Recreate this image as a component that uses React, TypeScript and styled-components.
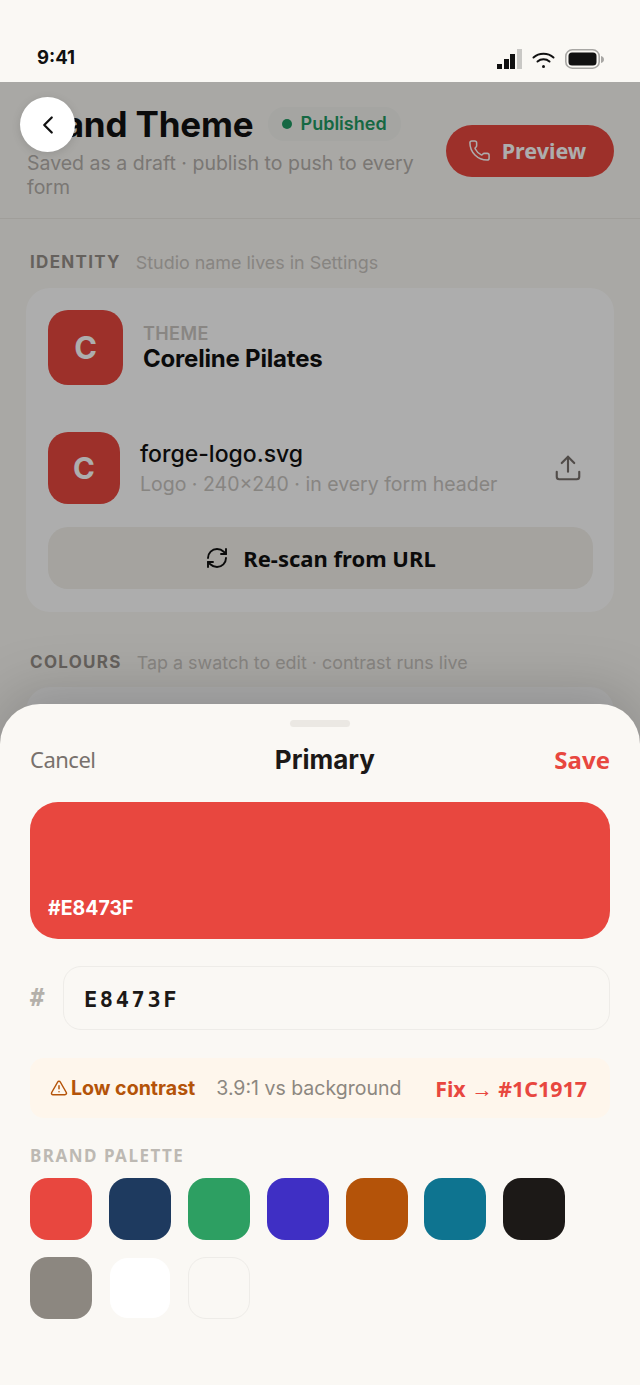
import React from 'react';
import { ChevronLeft, Phone, RefreshCw, TriangleAlert, Upload } from 'lucide-react';
import styled, { createGlobalStyle } from 'styled-components';

const PALETTE = ['#E8473F', '#1E3A5F', '#2D9F62', '#3F2FC4', '#B45309', '#0E7490', '#1C1917', '#8C8780'];

const GlobalStyle = createGlobalStyle`
  html, body {
    margin: 0;
    padding: 0;
    background: #faf8f4;
  }

  body {
    font-family: Inter, "Liberation Sans", sans-serif;
    color: #1c1917;
  }
`;

const App = () => (
  <Screen>
    <GlobalStyle />
    <StatusBar>
      <Clock>9:41</Clock>
      <StatusIcons>
        <svg width="25" height="20" viewBox="0 0 25 20">
          <rect x="0" y="15" width="5" height="5" fill="#111" />
          <rect x="7" y="10" width="5" height="10" fill="#111" />
          <rect x="13" y="5" width="5" height="15" fill="#111" />
          <rect x="20" y="0" width="5" height="20" fill="#c9c8c5" />
        </svg>
        <svg width="23" height="20" viewBox="0 0 23 20" fill="none" stroke="#111" strokeWidth="2" strokeLinecap="round">
          <path d="M1.5 8.500c5.600-5 14.400-5 20 0" />
          <path d="M5.500 12.500c3.400-2.900 8.600-2.900 12 0" />
          <circle cx="11.500" cy="17.500" r="1.500" fill="#111" stroke="none" />
        </svg>
        <svg width="40" height="20" viewBox="0 0 40 20">
          <rect x="0.800" y="0.800" width="33.400" height="18.400" rx="6.500" fill="none" stroke="#a8a7a4" strokeWidth="1.600" />
          <rect x="3.500" y="3.500" width="28" height="13" rx="3.500" fill="#111" />
          <path d="M36 7v7c1.800-.4 3-1.800 3-3.500S37.800 7.400 36 7z" fill="#a8a7a4" />
        </svg>
      </StatusIcons>
    </StatusBar>

    <Behind>
      <Header>
        <HeaderText>
          <TitleRow>
            <Title>Brand Theme</Title>
            <PublishedChip>
              <Dot />
              Published
            </PublishedChip>
          </TitleRow>
          <Subtitle>Saved as a draft · publish to push to every form</Subtitle>
        </HeaderText>
        <PreviewButton>
          <Phone size={23} strokeWidth={1.6} />
          Preview
        </PreviewButton>
      </Header>

      <Section>
        <SectionHead>
          <SectionLabel>IDENTITY</SectionLabel>
          <SectionHint>Studio name lives in Settings</SectionHint>
        </SectionHead>
        <Card>
          <ThemeRow>
            <LogoTile $size={75}>C</LogoTile>
            <div>
              <Eyebrow>THEME</Eyebrow>
              <StudioName>Coreline Pilates</StudioName>
            </div>
          </ThemeRow>
          <LogoRow>
            <LogoTile $size={72}>C</LogoTile>
            <LogoText>
              <FileName>forge-logo.svg</FileName>
              <FileMeta>Logo · 240×240 · in every form header</FileMeta>
            </LogoText>
            <UploadIcon>
              <Upload size={30} strokeWidth={1.7} />
            </UploadIcon>
          </LogoRow>
          <RescanButton>
            <RefreshCw size={24} strokeWidth={1.9} />
            Re-scan from URL
          </RescanButton>
        </Card>
      </Section>

      <ColoursSection>
        <SectionHead>
          <SectionLabel>COLOURS</SectionLabel>
          <SectionHint>Tap a swatch to edit · contrast runs live</SectionHint>
        </SectionHead>
        <EmptyCard />
      </ColoursSection>
    </Behind>

    <Scrim />

    <BackButton>
      <ChevronLeft size={30} strokeWidth={1.8} />
    </BackButton>

    <Sheet>
      <Handle />
      <SheetHeader>
        <Cancel>Cancel</Cancel>
        <SheetTitle>Primary</SheetTitle>
        <Save>Save</Save>
      </SheetHeader>

      <Preview>
        <PreviewHex>#E8473F</PreviewHex>
      </Preview>

      <HexRow>
        <HexMark>#</HexMark>
        <HexInput>E8473F</HexInput>
      </HexRow>

      <Warning>
        <WarningLabel>
          <TriangleAlert size={18} strokeWidth={2} />
          Low contrast
        </WarningLabel>
        <WarningRatio>3.9:1 vs background</WarningRatio>
        <WarningFix>
          Fix <Arrow>→</Arrow> #1C1917
        </WarningFix>
      </Warning>

      <PaletteLabel>BRAND PALETTE</PaletteLabel>
      <Palette>
        {PALETTE.map(color => (
          <Swatch key={color} $color={color} />
        ))}
        <WhiteSwatch />
        <PaperSwatch />
      </Palette>
    </Sheet>
  </Screen>
);

const Screen = styled.div`
  position: relative;
  width: 640px;
  height: 1385px;
  overflow: hidden;
  background: #faf8f4;
`;

const StatusBar = styled.div`
  height: 82px;
  box-sizing: border-box;
  padding: 46px 35px 0 37px;
  display: flex;
  justify-content: space-between;
  align-items: flex-start;
`;

const Clock = styled.div`
  font-size: 18.500px;
  font-weight: 700;
  line-height: 22px;
  color: #111;
`;

const StatusIcons = styled.div`
  display: flex;
  align-items: center;
  gap: 10px;
  margin-top: 3px;
`;

const Behind = styled.div`
  display: flex;
  flex-direction: column;
`;

const Header = styled.header`
  height: 137px;
  box-sizing: border-box;
  padding: 0 26px 0 27px;
  display: flex;
  align-items: center;
  justify-content: space-between;
  border-bottom: 1px solid #ece9e4;
`;

const HeaderText = styled.div`
  width: 400px;
`;

const TitleRow = styled.div`
  display: flex;
  align-items: center;
  gap: 14px;
`;

const Title = styled.h1`
  margin: 0;
  font-size: 35px;
  line-height: 46px;
  font-weight: 700;
  letter-spacing: -0.150px;
  color: #111;
  white-space: nowrap;
`;

const PublishedChip = styled.div`
  display: flex;
  align-items: center;
  gap: 9px;
  padding: 5px 14px;
  border-radius: 16px;
  background: rgba(30, 140, 90, 0.03);
  font-size: 18px;
  line-height: 24px;
  font-weight: 600;
  color: #1f9a63;
  white-space: nowrap;
`;

const Dot = styled.span`
  width: 10px;
  height: 10px;
  border-radius: 50%;
  background: #1f9a63;
`;

const Subtitle = styled.p`
  margin: 4px 0 0;
  font-size: 19.500px;
  line-height: 24px;
  color: #b4b0ab;
`;

const PreviewButton = styled.button`
  width: 168px;
  height: 52px;
  margin-top: 1px;
  padding: 0 6px 0 0;
  display: flex;
  align-items: center;
  justify-content: center;
  gap: 11px;
  border: 0;
  border-radius: 26px;
  background: #e8473f;
  color: #fff;
  font-family: "Noto Sans", sans-serif;
  font-size: 21.500px;
  font-weight: 700;
`;

const Section = styled.section`
  padding: 30px 26px 0;
`;

const ColoursSection = styled(Section)`
  padding-top: 37px;
`;

const SectionHead = styled.div`
  height: 26px;
  padding-left: 4px;
  display: flex;
  align-items: center;
  gap: 15px;
`;

const SectionLabel = styled.span`
  font-size: 17px;
  font-weight: 700;
  letter-spacing: 1.300px;
  color: #968f89;
`;

const SectionHint = styled.span`
  font-size: 17.900px;
  color: #c8c4bf;
`;

const Card = styled.div`
  margin-top: 13px;
  height: 324px;
  box-sizing: border-box;
  padding: 22px 21px 0 22px;
  border-radius: 24px;
  background: #fff;
  display: flex;
  flex-direction: column;
`;

const EmptyCard = styled(Card)`
  margin-top: 12px;
  height: 200px;
`;

const ThemeRow = styled.div`
  display: flex;
  align-items: center;
  gap: 20px;
`;

const LogoRow = styled.div`
  margin-top: 47px;
  display: flex;
  align-items: center;
  gap: 20px;
`;

const LogoTile = styled.div<{ $size: number }>`
  flex: none;
  width: ${p => p.$size}px;
  height: ${p => p.$size}px;
  border-radius: 20px;
  background: #e8473f;
  color: #fff;
  display: flex;
  align-items: center;
  justify-content: center;
  font-size: ${p => p.$size * 0.41}px;
  font-weight: 700;
`;

const Eyebrow = styled.div`
  font-size: 18px;
  line-height: 22px;
  font-weight: 600;
  letter-spacing: 0.4px;
  color: #cac6c1;
`;

const StudioName = styled.div`
  font-size: 24px;
  line-height: 27px;
  font-weight: 700;
  letter-spacing: -0.2px;
  color: #111;
`;

const LogoText = styled.div`
  flex: 1;
  min-width: 0;
`;

const FileName = styled.div`
  font-size: 23px;
  line-height: 30px;
  font-weight: 500;
  color: #111;
`;

const FileMeta = styled.div`
  margin-top: 2px;
  font-size: 19.500px;
  line-height: 26px;
  color: #c8c4bf;
  white-space: nowrap;
`;

const UploadIcon = styled.div`
  flex: none;
  display: flex;
  margin-right: 10px;
  color: #78716c;
`;

const RescanButton = styled.button`
  margin-top: 23px;
  height: 62px;
  display: flex;
  align-items: center;
  justify-content: center;
  gap: 14px;
  border: 0;
  border-radius: 20px;
  background: #f3f0ea;
  color: #111;
  font-family: "Noto Sans", sans-serif;
  font-size: 22px;
  font-weight: 700;
`;

const Scrim = styled.div`
  position: absolute;
  inset: 82px 0 0;
  background: rgba(0, 0, 0, 0.32);
`;

const BackButton = styled.button`
  position: absolute;
  left: 20px;
  top: 97px;
  width: 55px;
  height: 55px;
  padding: 0;
  display: flex;
  align-items: center;
  justify-content: center;
  border: 0;
  border-radius: 50%;
  background: #fff;
  color: #111;
  box-shadow: 0 2px 10px rgba(0, 0, 0, 0.12);
`;

const Sheet = styled.div`
  position: absolute;
  left: 0;
  right: 0;
  top: 704px;
  bottom: 0;
  box-sizing: border-box;
  padding: 16px 30px 0;
  border-radius: 40px 40px 0 0;
  background: #faf8f4;
  box-shadow: 0 -12px 60px rgba(0, 0, 0, 0.18);
`;

const Handle = styled.div`
  width: 60px;
  height: 7px;
  margin: 0 auto;
  border-radius: 4px;
  background: #ebe8e3;
`;

const SheetHeader = styled.div`
  margin-top: 10px;
  height: 44px;
  display: flex;
  align-items: center;
  justify-content: space-between;
`;

const Cancel = styled.span`
  font-family: "Noto Sans", sans-serif;
  font-size: 22px;
  letter-spacing: -0.500px;
  color: #78716c;
`;

const SheetTitle = styled.span`
  font-size: 26px;
  font-weight: 700;
  color: #1c1917;
`;

const Save = styled.span`
  font-family: "Noto Sans", sans-serif;
  font-size: 24px;
  font-weight: 700;
  color: #e8473f;
`;

const Preview = styled.div`
  margin-top: 21px;
  height: 137px;
  box-sizing: border-box;
  padding: 0 18px 18px;
  display: flex;
  align-items: flex-end;
  border-radius: 28px;
  background: #e8473f;
`;

const PreviewHex = styled.span`
  font-size: 19.500px;
  line-height: 26px;
  font-weight: 700;
  color: #fff;
`;

const HexRow = styled.div`
  margin-top: 27px;
  display: flex;
  align-items: center;
  gap: 17px;
`;

const HexMark = styled.span`
  width: 16px;
  font-family: "DejaVu Sans Mono", monospace;
  font-size: 24px;
  font-weight: 700;
  color: #b4b0aa;
`;

const HexInput = styled.div`
  flex: 1;
  height: 64px;
  box-sizing: border-box;
  padding: 2px 20px 0;
  display: flex;
  align-items: center;
  border: 1px solid #eeece8;
  border-radius: 18px;
  font-family: "DejaVu Sans Mono", monospace;
  font-size: 22px;
  font-weight: 700;
  letter-spacing: 2.600px;
  color: #1c1917;
`;

const Warning = styled.div`
  margin-top: 28px;
  height: 60px;
  box-sizing: border-box;
  padding: 0 23px 0 20px;
  display: flex;
  align-items: center;
  gap: 21px;
  border-radius: 14px;
  background: #fef6ec;
  white-space: nowrap;
`;

const WarningLabel = styled.span`
  display: flex;
  align-items: center;
  gap: 3px;
  font-size: 19.600px;
  font-weight: 700;
  color: #b45309;
`;

const WarningRatio = styled.span`
  font-size: 19.500px;
  color: #8c8780;
`;

const WarningFix = styled.span`
  margin-left: auto;
  font-family: "Noto Sans", sans-serif;
  font-size: 21.400px;
  font-weight: 700;
  color: #e8473f;
`;

const Arrow = styled.span`
  font-family: "Liberation Sans", sans-serif;
  font-weight: 400;
`;

const PaletteLabel = styled.div`
  margin-top: 27px;
  font-family: "Noto Sans", sans-serif;
  font-size: 17px;
  line-height: 22px;
  font-weight: 700;
  letter-spacing: 1.500px;
  color: #bdb9b3;
`;

const Palette = styled.div`
  margin-top: 11px;
  display: grid;
  grid-template-columns: repeat(7, 62px);
  grid-auto-rows: 62px;
  column-gap: 16.900px;
  row-gap: 17px;
`;

const Swatch = styled.div<{ $color: string }>`
  border-radius: 18px;
  background: ${p => p.$color};
`;

const WhiteSwatch = styled(Swatch).attrs({ $color: '#fff' })`
  margin: 1px;
`;

const PaperSwatch = styled(Swatch).attrs({ $color: '#faf8f4' })`
  border: 1px solid #eeece8;
`;

export default App;
